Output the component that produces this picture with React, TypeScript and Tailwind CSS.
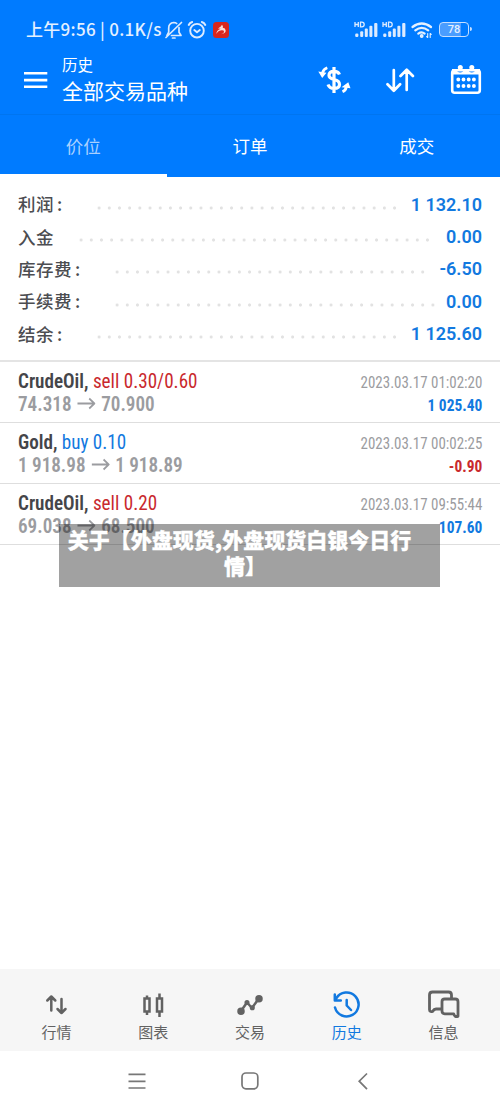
import React from 'react';

const summary = [
  { label: '利润', colon: true, labelW: 'w-[76px]', dots: 'w-[306px]', value: '1 132.10' },
  { label: '入金', colon: false, labelW: 'w-[58px]', dots: 'w-[357px]', value: '0.00' },
  { label: '库存费', colon: true, labelW: 'w-[94px]', dots: 'w-[316px]', value: '-6.50' },
  { label: '手续费', colon: true, labelW: 'w-[94px]', dots: 'w-[326px]', value: '0.00' },
  { label: '结余', colon: true, labelW: 'w-[76px]', dots: 'w-[306px]', value: '1 125.60' },
];

const deals = [
  { symbol: 'CrudeOil,', side: 'sell 0.30/0.60', sideColor: 'text-[#c9292d]', from: '74.318', to: '70.900', time: '2023.03.17 01:02:20', profit: '1 025.40', profitColor: 'text-[#1279e0]' },
  { symbol: 'Gold,', side: 'buy 0.10', sideColor: 'text-[#1279e0]', from: '1 918.98', to: '1 918.89', time: '2023.03.17 00:02:25', profit: '-0.90', profitColor: 'text-[#c9292d]' },
  { symbol: 'CrudeOil,', side: 'sell 0.20', sideColor: 'text-[#c9292d]', from: '69.038', to: '68.500', time: '2023.03.17 09:55:44', profit: '107.60', profitColor: 'text-[#1279e0]' },
];

function Signal() {
  return (
    <svg width="24" height="18" viewBox="0 0 24 18" fill="#dcebff">
      <path d="M1 1v5M4.300 1v5M1 3.500h3.300M6.500 1.200v4.600h1.300q2.400 0 2.400-2.300T7.800 1.200z" fill="none" stroke="#dcebff" strokeWidth="1.300" />
      <rect x="1.200" y="12.500" width="3.200" height="3.500" rx="1.200" />
      <rect x="6.200" y="10.300" width="3" height="5.700" rx="1" />
      <rect x="10.800" y="7.500" width="3" height="8.500" rx="1" />
      <rect x="15.400" y="4.800" width="3" height="11.200" rx="1" />
      <rect x="20.200" y="2" width="3.200" height="14" rx="1" />
    </svg>
  );
}

function StatusBar() {
  return (
    <div className="flex h-[56px] items-center pl-[26px] pr-[31px] pt-[3px]">
      <span className="-mt-px w-[138px] whitespace-nowrap text-[17px] font-medium leading-6 tracking-[0.300px] text-[#e4f0ff]">上午9:56 | 0.1K/s</span>
      <svg width="20" height="20" viewBox="164 19 20 20" fill="none" stroke="#dcebff" strokeWidth="1.700" strokeLinecap="round" strokeLinejoin="round">
        <path d="M167 34.500l1.700-3.300V27q0-5 5-5.500 2 0 3 1M179 26.500v4.700l2 3.300h-9.500M181.500 21.500L166 36.500M172.500 37h2.500" />
      </svg>
      <svg className="ml-[3px]" width="20" height="20" viewBox="187 19 20 20" fill="none" stroke="#dcebff" strokeWidth="1.900" strokeLinecap="round" strokeLinejoin="round">
        <circle cx="197" cy="29.700" r="6.800" />
        <path d="M188.700 24q1-2.300 3.500-3M205.300 24q-1-2.300-3.500-3M194.300 29l2.700 2.200 2.800-2.200" />
      </svg>
      <svg className="ml-[6px]" width="16" height="16" viewBox="0 0 16 16">
        <rect width="16" height="16" rx="3.500" fill="#d9261c" />
        <path d="M9 2.700Q8.500 4.500 5 6.500l2.700.2Q3 8.500 3.500 12q.8-3 5-3.800 2.500-.2 2.500 1.300 0 2-3.500 2.700 5.300-.3 5.200-3.700Q12.500 6 9.800 5.700q.7-1.500-.8-3z" fill="#fbded9" />
      </svg>
      <div className="ml-auto flex items-center">
        <Signal />
        <span className="w-[4px]" />
        <Signal />
        <svg className="ml-[5px]" width="23" height="18" viewBox="411 20 23 18" fill="none" stroke="#e4f0ff" strokeWidth="2.200" strokeLinecap="round">
          <path d="M412.500 26q9.200-7 18.500 0M415.300 29.400q6.400-5 12.900 0M418.300 32.600q3.400-2.500 6.300 0" />
          <circle cx="421.700" cy="35" r=".8" fill="#e4f0ff" />
          <path d="M427.700 32.500v4M430.200 32.500v4M427.700 36.500l-1-1M430.200 32.500l1 1" strokeWidth="1.100" />
        </svg>
        <div className="relative ml-[5px] h-[15px] w-[30px] rounded-[4px] border-[1.500px] border-[#c6dfff] bg-[linear-gradient(90deg,#4a9dff_75%,transparent_75%)] text-center font-['Roboto'] text-[11px] font-medium leading-[13px] text-[#e4f0ff]">
          78
          <span className="absolute -right-[4px] top-[4px] h-[4px] w-[2px] rounded-r bg-[#c6dfff]" />
        </div>
      </div>
    </div>
  );
}

function Header() {
  return (
    <header className="h-[177px] bg-[#007bff] text-white">
      <StatusBar />
      <div className="flex h-[59px] items-start border-b border-[#0075f0]">
        <svg className="ml-[24px] mt-[15px]" width="24" height="18" viewBox="0 0 24 18" fill="#fff">
          <path d="M0 1h23.300v2.600H0zM0 7.800h23.300v2.600H0zM0 14.500h23.300v2.600H0z" />
        </svg>
        <div className="-mt-px ml-[14px] w-[240px]">
          <div className="h-[22px] text-[15.500px] leading-[19px]">历史</div>
          <div className="text-[21px] leading-[26px]">全部交易品种</div>
        </div>
        <svg className="ml-[15px] mt-[9px]" width="34" height="30" viewBox="317 65 34 30" fill="none" stroke="#fff" strokeWidth="3.200">
          <path d="M339.500 74.500q-1.300-3.200-5.500-3.200-5 0-5 4 0 3 5 4.200 5.500 1.200 5.500 5t-5.500 4q-4.500 0-6-4M334 67v26" />
          <path d="M327.300 67.800q-3.800 1.300-4.800 5M342.500 91.800q3.700-1.700 3.700-5.300" strokeWidth="2.800" />
          <path d="M318.300 71.500l8.200 1.300-4.300 5.200zM341.500 87.300l6.800-5 2.200 6z" fill="#fff" stroke="none" />
        </svg>
        <svg className="ml-[35px] mt-[11px]" width="30" height="26" viewBox="386 67 30 26" fill="none" stroke="#fff" strokeWidth="2.700" strokeLinecap="round" strokeLinejoin="round">
          <path d="M393.800 70v20.500M387.500 84.300l6.300 6.500 6.300-6.500M406.700 90V70M400.500 76l6.200-6.300 6.200 6.300" />
        </svg>
        <svg className="ml-[34px] mt-[8px]" width="32" height="32" viewBox="450 64 32 32" fill="none" stroke="#fff">
          <rect x="452.200" y="70.200" width="27.600" height="22.600" rx="2.500" strokeWidth="2.600" />
          <path d="M452 69h4.500q.5 3.500 3.700 3.500t3.700-3.500h4.200q.5 3.500 3.700 3.500t3.700-3.500h4.500v5.500h-28z" fill="#fff" stroke="none" />
          <circle cx="460.300" cy="67.400" r="2.500" fill="#fff" stroke="none" />
          <circle cx="471.800" cy="67.400" r="2.500" fill="#fff" stroke="none" />
          <path d="M458.300 79.500h17M458.300 86h17" strokeWidth="3.900" strokeLinecap="round" strokeDasharray="0 5.200" />
        </svg>
      </div>
      <nav className="grid h-[62px] grid-cols-3 text-center text-[17.500px] leading-[62px]">
        <div className="h-[62px] border-b-[3px] border-white text-[#a9d0ff]">价位</div>
        <div>订单</div>
        <div>成交</div>
      </nav>
    </header>
  );
}

const tabs = [
  {
    label: '行情',
    icon: <path d="M51.300 1010.500v-14M47.300 1000.500l4-4 4 4M61.500 999v14M57.500 1009l4 4 4-4" />,
    box: '40 988 32 32',
  },
  {
    label: '图表',
    icon: <path strokeLinecap="butt" strokeLinejoin="miter" d="M144.500 998.500h5v13h-5zM157 998.500h5v13h-5zM147 995.500v3M147 1011.500v3.500M159.500 993.500v5M159.500 1011.500v5.500" />,
    box: '137 988 32 32',
  },
  {
    label: '交易',
    icon: (
      <g>
        <path d="M241 1011l6-8.500 5 5.500 6.500-9" />
        <circle cx="241" cy="1011.300" r="2.500" fill="currentColor" />
        <circle cx="247" cy="1002.500" r="1.300" />
        <circle cx="252.300" cy="1007.700" r="1.300" />
        <circle cx="259" cy="998.700" r="2.500" fill="currentColor" />
      </g>
    ),
    box: '234 988 32 32',
  },
  {
    label: '历史',
    icon: (
      <path strokeWidth="2.500" d="M336.300 998.300A12 12 0 1 1 335 1007.500M334.800 994.500v6h6M346.700 1000v5.500l4.300 4.500" />
    ),
    box: '331 988 32 32',
  },
  {
    label: '信息',
    icon: (
      <g strokeWidth="2.800">
        <path d="M440.500 1009h-4.500q-2 0-3.300 2.300-3.200 1-3.200-1.800V995q0-3 3-3h16q3 0 3 3v3.500" />
        <path d="M444.700 999h10.500q2.800 0 2.800 2.800v14.500q-3.500 1-4.300-2.500h-9q-2.700 0-2.700-2.700v-9.300q0-2.800 2.700-2.800z" />
      </g>
    ),
    box: '427 988 34 32',
  },
];

export default function App() {
  return (
    <div className="flex h-[1111px] w-[500px] flex-col overflow-hidden bg-white font-['Noto_Sans_CJK_SC',sans-serif]">
      <Header />
      <section className="h-[185px] border-b-2 border-[#e4e4e4] pl-[18px] pr-[18px] pt-[11px] text-[#4c4d51]">
        {summary.map((r) => (
          <div key={r.label} className="flex h-[32.400px] items-center whitespace-nowrap">
            <span className={`${r.labelW} flex shrink-0 text-[17.500px] font-medium leading-[32px] tracking-[0.500px]`}>
              {r.label}
              {r.colon && <span className="pl-[3px]">:</span>}
            </span>
            <span className={`${r.dots} mt-[7px] h-[4px] shrink-0 bg-[radial-gradient(circle,#e2e2e2_1.2px,transparent_1.900px)] bg-[length:10.200px_4px] bg-repeat-x`} />
            <span className="ml-auto pt-px font-['Roboto'] text-[18px] font-semibold leading-8 text-[#1279e0]">{r.value}</span>
          </div>
        ))}
      </section>
      <section className="relative">
        {deals.map((d) => (
          <div key={d.time} className="flex h-[61px] justify-between whitespace-nowrap border-b-[1.500px] border-[#dedede] px-[18px] font-['Roboto_Condensed','Roboto']">
            <div className="pt-[8px]">
              <div className="origin-left scale-x-[0.956] text-[20px] leading-[23px]">
                <b className="font-semibold text-[#444549]">{d.symbol}</b> <span className={d.sideColor}>{d.side}</span>
              </div>
              <div className="flex origin-left scale-x-[0.956] items-center text-[20px] font-semibold leading-[22px] text-[#9b9ca0]">
                {d.from}
                <svg className="mx-[6px]" width="19" height="14" viewBox="0 0 19 14" fill="none" stroke="currentColor" strokeWidth="1.800">
                  <path d="M0 6.500h18M12.500 1.500l5.500 5-5.500 5" />
                </svg>
                {d.to}
              </div>
            </div>
            <div className="pt-[10px] text-right">
              <div className="origin-right scale-x-[0.880] text-[17px] leading-[21px] text-[#9b9ca0]">{d.time}</div>
              <div className={`${d.profitColor} origin-right scale-x-[0.907] text-[17px] font-bold leading-[24px]`}>{d.profit}</div>
            </div>
          </div>
        ))}
        <div className="absolute left-[59px] top-[162px] h-[63px] w-[381px] whitespace-nowrap bg-black/[0.370] pt-[2px] text-center text-[21px] font-black leading-[26px] text-white [-webkit-text-stroke:0.300px_white]">
          <div className="pr-[20px]">关于【外盘现货,外盘现货白银今日行</div>
          <div className="pr-[9px]">情】</div>
        </div>
      </section>
      <footer className="mt-auto h-[142px]">
        <div className="flex h-[82px] justify-between bg-[#f6f6f6] px-[8px] pt-[19px]">
          {tabs.map((t, i) => (
            <div key={t.label} className={`${i === 3 ? 'text-[#1279e0]' : 'text-[#626262]'} flex w-[97px] flex-col items-center`}>
              <svg width={i === 4 ? 34 : 32} height="32" viewBox={t.box} fill="none" stroke="currentColor" strokeWidth="2.500" strokeLinecap="round" strokeLinejoin="round">
                {t.icon}
              </svg>
              <span className="text-[15px] leading-[23px]">{t.label}</span>
            </div>
          ))}
        </div>
        <svg width="500" height="60" viewBox="0 1051 500 60" fill="none" stroke="#777" strokeWidth="1.700">
          <path d="M128.500 1074.300h17M128.500 1081.300h17M128.500 1088h17M367 1073.500l-7.800 7.700 7.800 8" />
          <rect x="242" y="1073" width="15.800" height="15.800" rx="4" />
        </svg>
      </footer>
    </div>
  );
}
